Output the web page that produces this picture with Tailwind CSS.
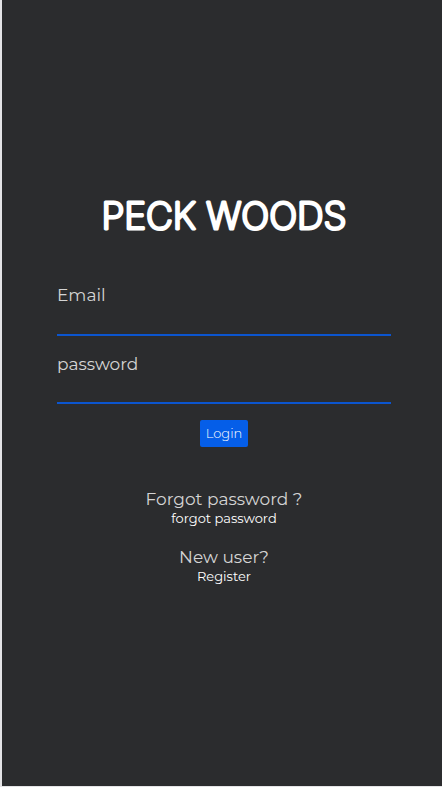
<!DOCTYPE html>
<html lang="en">
<head>
<meta charset="utf-8">
<meta name="viewport" content="width=device-width, initial-scale=1">
<title>Peck Woods</title>
<script src="https://cdn.jsdelivr.net/npm/@tailwindcss/browser@4"></script>
</head>
<body class="bg-[#e4e4e6]">
<main class="min-h-screen flex flex-col border-l-2 border-b border-[#e4e4e6] bg-[#2b2c2e] font-['Montserrat','Inter',sans-serif] text-[#d4d4d4]">
  <div class="grow flex flex-col items-center justify-center pb-3 pl-[55px] pr-[51px]">
    <h1 class="w-full flex justify-center">
      <svg class="w-[270px] h-12" viewBox="0 0 270 48" role="img" aria-label="Peck Woods">
        <text x="135" y="38" text-anchor="middle" font-family="Inter, Arial, sans-serif" font-weight="200" font-size="37" fill="#fff" stroke="#fff" stroke-width="3" stroke-linejoin="round">PECK WOODS</text>
      </svg>
    </h1>
    <form class="mt-11 w-full flex flex-col">
      <label for="email" class="text-[17px] leading-6">Email</label>
      <input id="email" type="email" class="h-[29px] w-full border-b-2 border-[#0b55cf] bg-transparent text-base outline-none">
      <label for="password" class="mt-4 text-[17px] leading-6">password</label>
      <input id="password" type="password" class="h-7 w-full border-b-2 border-[#0b55cf] bg-transparent text-base outline-none">
      <button type="button" class="mt-4 self-center h-[27px] w-12 rounded-xs bg-[#055ee8] text-[13px] font-light text-white">Login</button>
    </form>
    <section class="mt-10 text-center">
      <p class="text-[17px] leading-6">Forgot password ?</p>
      <a href="#" class="block text-[13px] leading-[14px] text-white">forgot password</a>
    </section>
    <section class="mt-5 text-center">
      <p class="text-[17px] leading-6">New user?</p>
      <a href="#" class="block text-[13px] leading-[14px] text-white">Register</a>
    </section>
  </div>
</main>
</body>
</html>
